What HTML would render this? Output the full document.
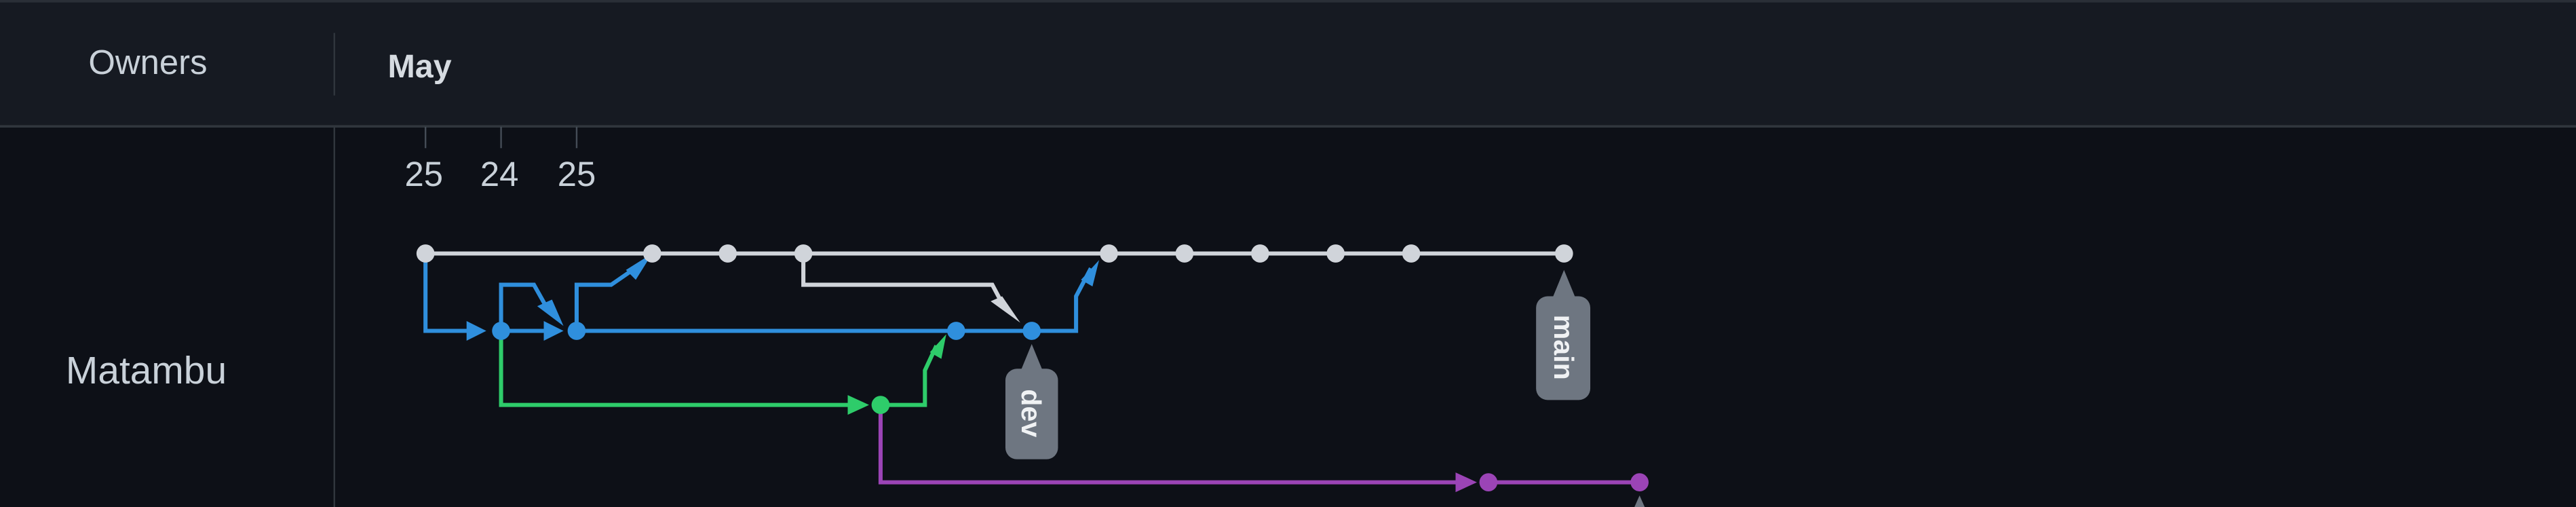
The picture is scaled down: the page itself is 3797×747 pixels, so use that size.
<!DOCTYPE html>
<html><head><meta charset="utf-8"><style>
html,body{margin:0;padding:0;background:#0d1017;}
svg{display:block;}
</style></head><body>
<svg width="3797" height="747" viewBox="0 0 1568 308" preserveAspectRatio="none" xmlns="http://www.w3.org/2000/svg" font-family="Liberation Sans, Arial, sans-serif">
<rect x="0" y="0" width="1568" height="308" fill="#0d1017"/>
<rect x="0" y="0" width="1568" height="76" fill="#161a22"/>
<rect x="0" y="0" width="1568" height="1.5" fill="#2a2f37"/>
<rect x="0" y="76" width="1568" height="1.5" fill="#30363d"/>
<rect x="203" y="20" width="1" height="38" fill="#30363d"/>
<rect x="203" y="77" width="1" height="231" fill="#30363d"/>
<text x="90" y="45" fill="#c9d1d9" font-size="21" text-anchor="middle">Owners</text>
<text x="236" y="47" fill="#d6dbe1" font-size="20" font-weight="bold">May</text>
<text x="89" y="233" fill="#c9d1d9" font-size="23.5" text-anchor="middle">Matambu</text>
<g stroke="#444c56" stroke-width="1"><line x1="259" y1="77" x2="259" y2="90"/><line x1="305" y1="77" x2="305" y2="90"/><line x1="351" y1="77" x2="351" y2="90"/></g>
<g fill="#c9d1d9" font-size="21" text-anchor="middle"><text x="258" y="113">25</text><text x="304" y="113">24</text><text x="351" y="113">25</text></g>
<g fill="none" stroke-width="2.5">
<path d="M259 154H952" stroke="#d0d4da"/>
<path d="M489 154V173H604L612 188" stroke="#d0d4da"/>
<path d="M259 154V201H292M305 201H340M351 201H655V180L664 163M305 201V173H325L334 189M351 201V173H372L388 162" stroke="#2f8fdd"/>
<path d="M305 201V246H524M536 246H563V225L570 210" stroke="#2ecc6a"/>
<path d="M536 246V293H895M906 293H998" stroke="#9b44b6"/>
</g>
<g>
<polygon points="284,195 296,201 284,207" fill="#2f8fdd"/>
<polygon points="331,195 343,201 331,207" fill="#2f8fdd"/>
<polygon points="327,186 343,198 336,182" fill="#2f8fdd"/>
<polygon points="381,164 397,154 387,170" fill="#2f8fdd"/>
<polygon points="658,170 669,158 665,174" fill="#2f8fdd"/>
<polygon points="603,183 621,196 610,180" fill="#d0d4da"/>
<polygon points="516,240 529,246 516,252" fill="#2ecc6a"/>
<polygon points="566,214 576,203 573,218" fill="#2ecc6a"/>
<polygon points="886,287 899,293 886,299" fill="#9b44b6"/>
</g>
<g fill="#d0d4da"><circle cx="259" cy="154" r="5.5"/><circle cx="397" cy="154" r="5.5"/><circle cx="443" cy="154" r="5.5"/><circle cx="489" cy="154" r="5.5"/><circle cx="675" cy="154" r="5.5"/><circle cx="721" cy="154" r="5.5"/><circle cx="767" cy="154" r="5.5"/><circle cx="813" cy="154" r="5.5"/><circle cx="859" cy="154" r="5.5"/><circle cx="952" cy="154" r="5.5"/></g>
<g fill="#2f8fdd"><circle cx="305" cy="201" r="5.5"/><circle cx="351" cy="201" r="5.5"/><circle cx="582" cy="201" r="5.5"/><circle cx="628" cy="201" r="5.5"/></g>
<circle cx="536" cy="246" r="5.5" fill="#2ecc6a"/>
<g fill="#9b44b6"><circle cx="906" cy="293" r="5.5"/><circle cx="998" cy="293" r="5.5"/></g>
<g fill="#6e7681">
<polygon points="628,209 621,226 635,226"/>
<rect x="612" y="224" width="32" height="55" rx="7"/>
<polygon points="952,164 945,181 959,181"/>
<rect x="935" y="180" width="33" height="63" rx="7"/>
<polygon points="998,301 994,310 1002,310"/>
</g>
<g fill="#f0f2f4" font-size="17" font-weight="bold">
<text transform="translate(622,251) rotate(90)" text-anchor="middle">dev</text>
<text transform="translate(946,211) rotate(90)" text-anchor="middle">main</text>
</g>
</svg>
</body></html>
